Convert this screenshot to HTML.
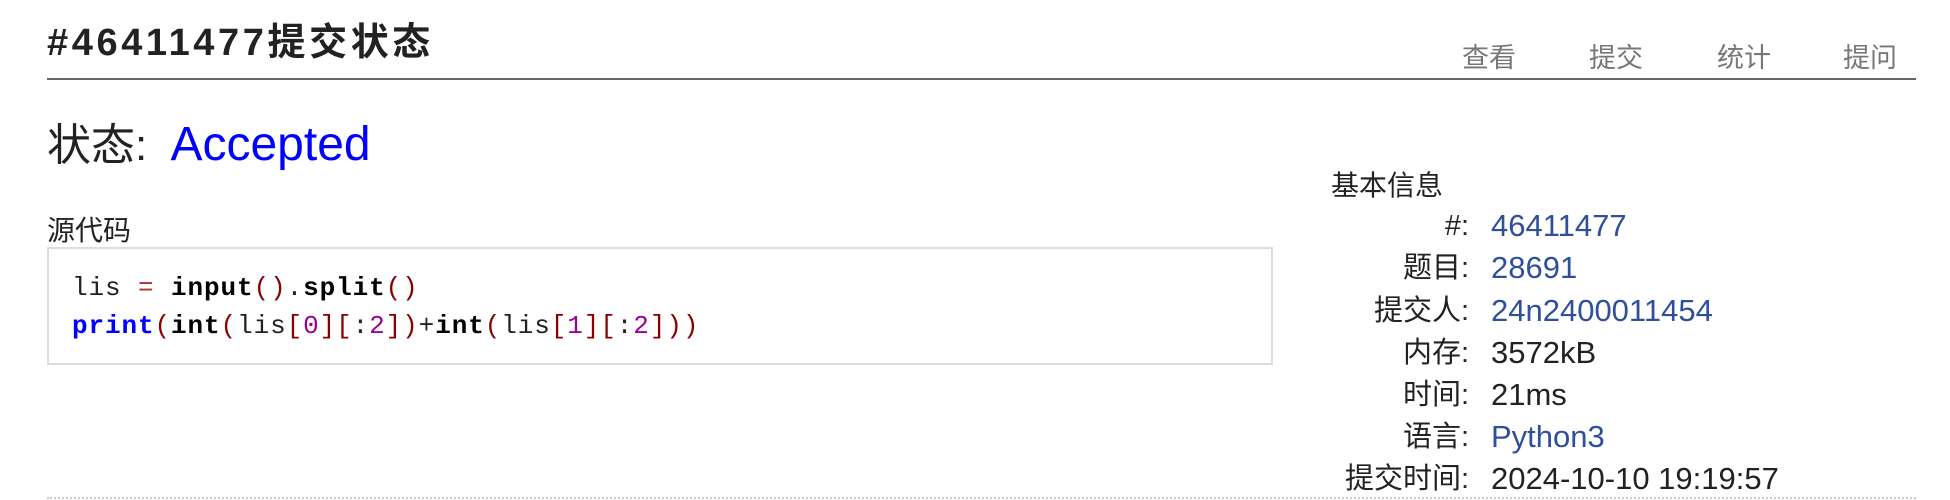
<!DOCTYPE html>
<html><head><meta charset="utf-8"><style>
body{margin:0;width:1950px;height:500px;background:#fff;font-family:"Liberation Sans","Noto Sans CJK SC",sans-serif;color:#222;position:relative;overflow:hidden}
.a{position:absolute;white-space:nowrap}
h1{position:absolute;left:47px;top:11px;margin:0;font-size:38px;letter-spacing:3.6px;font-weight:bold;color:#222;white-space:nowrap}
.hl{position:absolute;left:47px;top:78px;width:1869px;height:2px;background:#666}
.nav{font-size:27px;color:#777;top:36px}
.st{left:47px;top:109px;font-size:44px}
.code{position:absolute;left:47px;top:247px;width:1226px;height:118px;border:2px solid #ddd;box-sizing:border-box;background:#fff}
.code pre{margin:0;position:absolute;left:23px;top:20px;font-family:"Liberation Mono",monospace;font-size:26px;line-height:38px;letter-spacing:0.9px;color:#222}
.k{color:#00f;font-weight:bold}.b{font-weight:bold;color:#000}.p{color:#800}.n{color:#909}.o{color:#a33}
.row{position:absolute;left:1300px;height:42px;line-height:42px;white-space:nowrap}
.row .l{display:inline-block;width:169px;text-align:right;font-size:29px;vertical-align:middle}
.row .v{display:inline-block;margin-left:22px;font-size:31px;vertical-align:middle}
.lk{color:#2f4f9a}
.dl{position:absolute;left:47px;top:497px;width:1869px;border-top:2px dotted #ccc}
</style></head><body>
<h1>#46411477提交状态</h1>
<div class="hl"></div>
<div class="a nav" style="left:1462px">查看</div>
<div class="a nav" style="left:1589px">提交</div>
<div class="a nav" style="left:1717px">统计</div>
<div class="a nav" style="left:1843px">提问</div>
<div class="a st">状态: <span style="color:#00f;font-size:48px;margin-left:11px">Accepted</span></div>
<div class="a" style="left:47px;top:209px;font-size:28px">源代码</div>
<div class="code"><pre>lis <span class="o">=</span> <span class="b">input</span><span class="p">()</span>.<span class="b">split</span><span class="p">()</span>
<span class="k">print</span><span class="p">(</span><span class="b">int</span><span class="p">(</span>lis<span class="p">[</span><span class="n">0</span><span class="p">][</span>:<span class="n">2</span><span class="p">])</span>+<span class="b">int</span><span class="p">(</span>lis<span class="p">[</span><span class="n">1</span><span class="p">][</span>:<span class="n">2</span><span class="p">]))</span></pre></div>
<div class="a" style="left:1331px;top:164px;font-size:28px">基本信息</div>
<div class="row" style="top:205px"><span class="l">#:</span><span class="v lk">46411477</span></div>
<div class="row" style="top:247px"><span class="l">题目:</span><span class="v lk">28691</span></div>
<div class="row" style="top:290px"><span class="l">提交人:</span><span class="v lk">24n2400011454</span></div>
<div class="row" style="top:332px"><span class="l">内存:</span><span class="v">3572kB</span></div>
<div class="row" style="top:374px"><span class="l">时间:</span><span class="v">21ms</span></div>
<div class="row" style="top:416px"><span class="l">语言:</span><span class="v lk">Python3</span></div>
<div class="row" style="top:458px"><span class="l">提交时间:</span><span class="v">2024-10-10 19:19:57</span></div>
<div class="dl"></div>
</body></html>
